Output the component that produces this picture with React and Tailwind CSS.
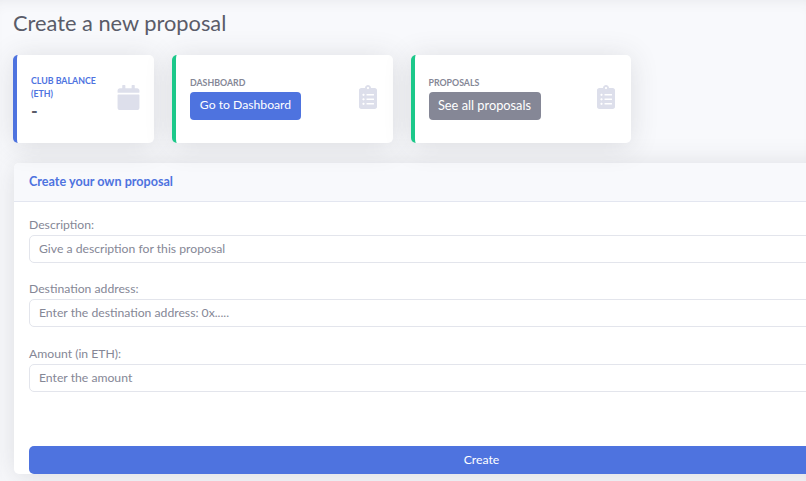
import React from 'react';
import { FaCalendar, FaClipboardList } from 'react-icons/fa';

function StatCard({ accent, width, children, icon }) {
  return (
    <div className={`flex items-center justify-between h-[88px] rounded-[5px] bg-white border-l-[4px] ${accent} ${width} pl-[14px] pr-[13px] shadow-[0_2.4px_28px_rgba(58,59,69,0.15)]`}>
      <div className="pb-[1px]">{children}</div>
      {icon}
    </div>
  );
}

function Field({ label, placeholder, className }) {
  return (
    <div className={className}>
      <label className="block pb-[1px] text-[12.2px] leading-[18px] text-[#858796]">{label}</label>
      <input
        placeholder={placeholder}
        className="block w-full h-[28px] pl-[9px] pr-[9px] pb-[2px] rounded-[5px] border border-[#e3e5ec] bg-white text-[12.2px] outline-none placeholder:text-[#858796]"
      />
    </div>
  );
}

export default function App() {
  return (
    <div className="h-screen overflow-hidden bg-[#f8f9fc] pl-[13px] font-['Lato',sans-serif] shadow-[inset_0_10px_16px_-12px_rgba(58,59,69,0.12)]">
      <h1 className="pt-[8px] h-[55px] text-[21.8px] leading-[30px] text-[#5a5c69]">Create a new proposal</h1>

      <div className="flex gap-[18px]">
        <StatCard
          accent="border-[#4e73df]"
          width="w-[141px]"
          icon={<FaCalendar className="text-[#dddfeb] shrink-0 -mt-[3px]" size={25} />}
        >
          <div className="w-[72px] text-[8.8px] leading-[13px] font-bold text-[#4e73df]">CLUB BALANCE (ETH)</div>
          <div className="text-[18px] leading-[23px] font-bold text-[#5a5c69]">-</div>
        </StatCard>
        <StatCard
          accent="border-[#1cc88a]"
          width="w-[220.5px]"
          icon={<FaClipboardList className="text-[#dddfeb] shrink-0 -mt-[5px]" size={24} />}
        >
          <div className="mb-[4px] text-[8.8px] leading-[11px] font-bold text-[#858796]">DASHBOARD</div>
          <button className="block h-[28px] w-[111px] pb-[1px] rounded-[4px] bg-[#4e73df] text-[12.2px] text-white">Go to Dashboard</button>
        </StatCard>
        <StatCard
          accent="border-[#1cc88a]"
          width="w-[220.5px]"
          icon={<FaClipboardList className="text-[#dddfeb] shrink-0 -mt-[5px]" size={24} />}
        >
          <div className="mb-[4px] text-[8.8px] leading-[11px] font-bold text-[#858796]">PROPOSALS</div>
          <button className="block h-[28px] w-[112px] pb-[1px] rounded-[4px] bg-[#858796] text-[12.8px] text-white">See all proposals</button>
        </StatCard>
      </div>

      <div className="ml-[1px] mt-[20px] w-[935px] rounded-[5px] bg-white shadow-[0_2.4px_28px_rgba(58,59,69,0.15)]">
        <div className="flex items-center h-[39px] px-[15px] bg-[#f8f9fc] border-b border-[#e3e6f0] rounded-t-[5px]">
          <h6 className="text-[12.6px] font-bold text-[#4e73df]">Create your own proposal</h6>
        </div>
        <div className="px-[15px] pt-[14px]">
          <Field label="Description:" placeholder="Give a description for this proposal" />
          <Field className="mt-[17px]" label="Destination address:" placeholder="Enter the destination address: 0x....." />
          <Field className="mt-[18px]" label="Amount (in ETH):" placeholder="Enter the amount" />
          <button className="block w-full h-[28px] mt-[54px] rounded-[5px] bg-[#4e73df] text-[12.2px] text-white">Create</button>
        </div>
      </div>
    </div>
  );
}
